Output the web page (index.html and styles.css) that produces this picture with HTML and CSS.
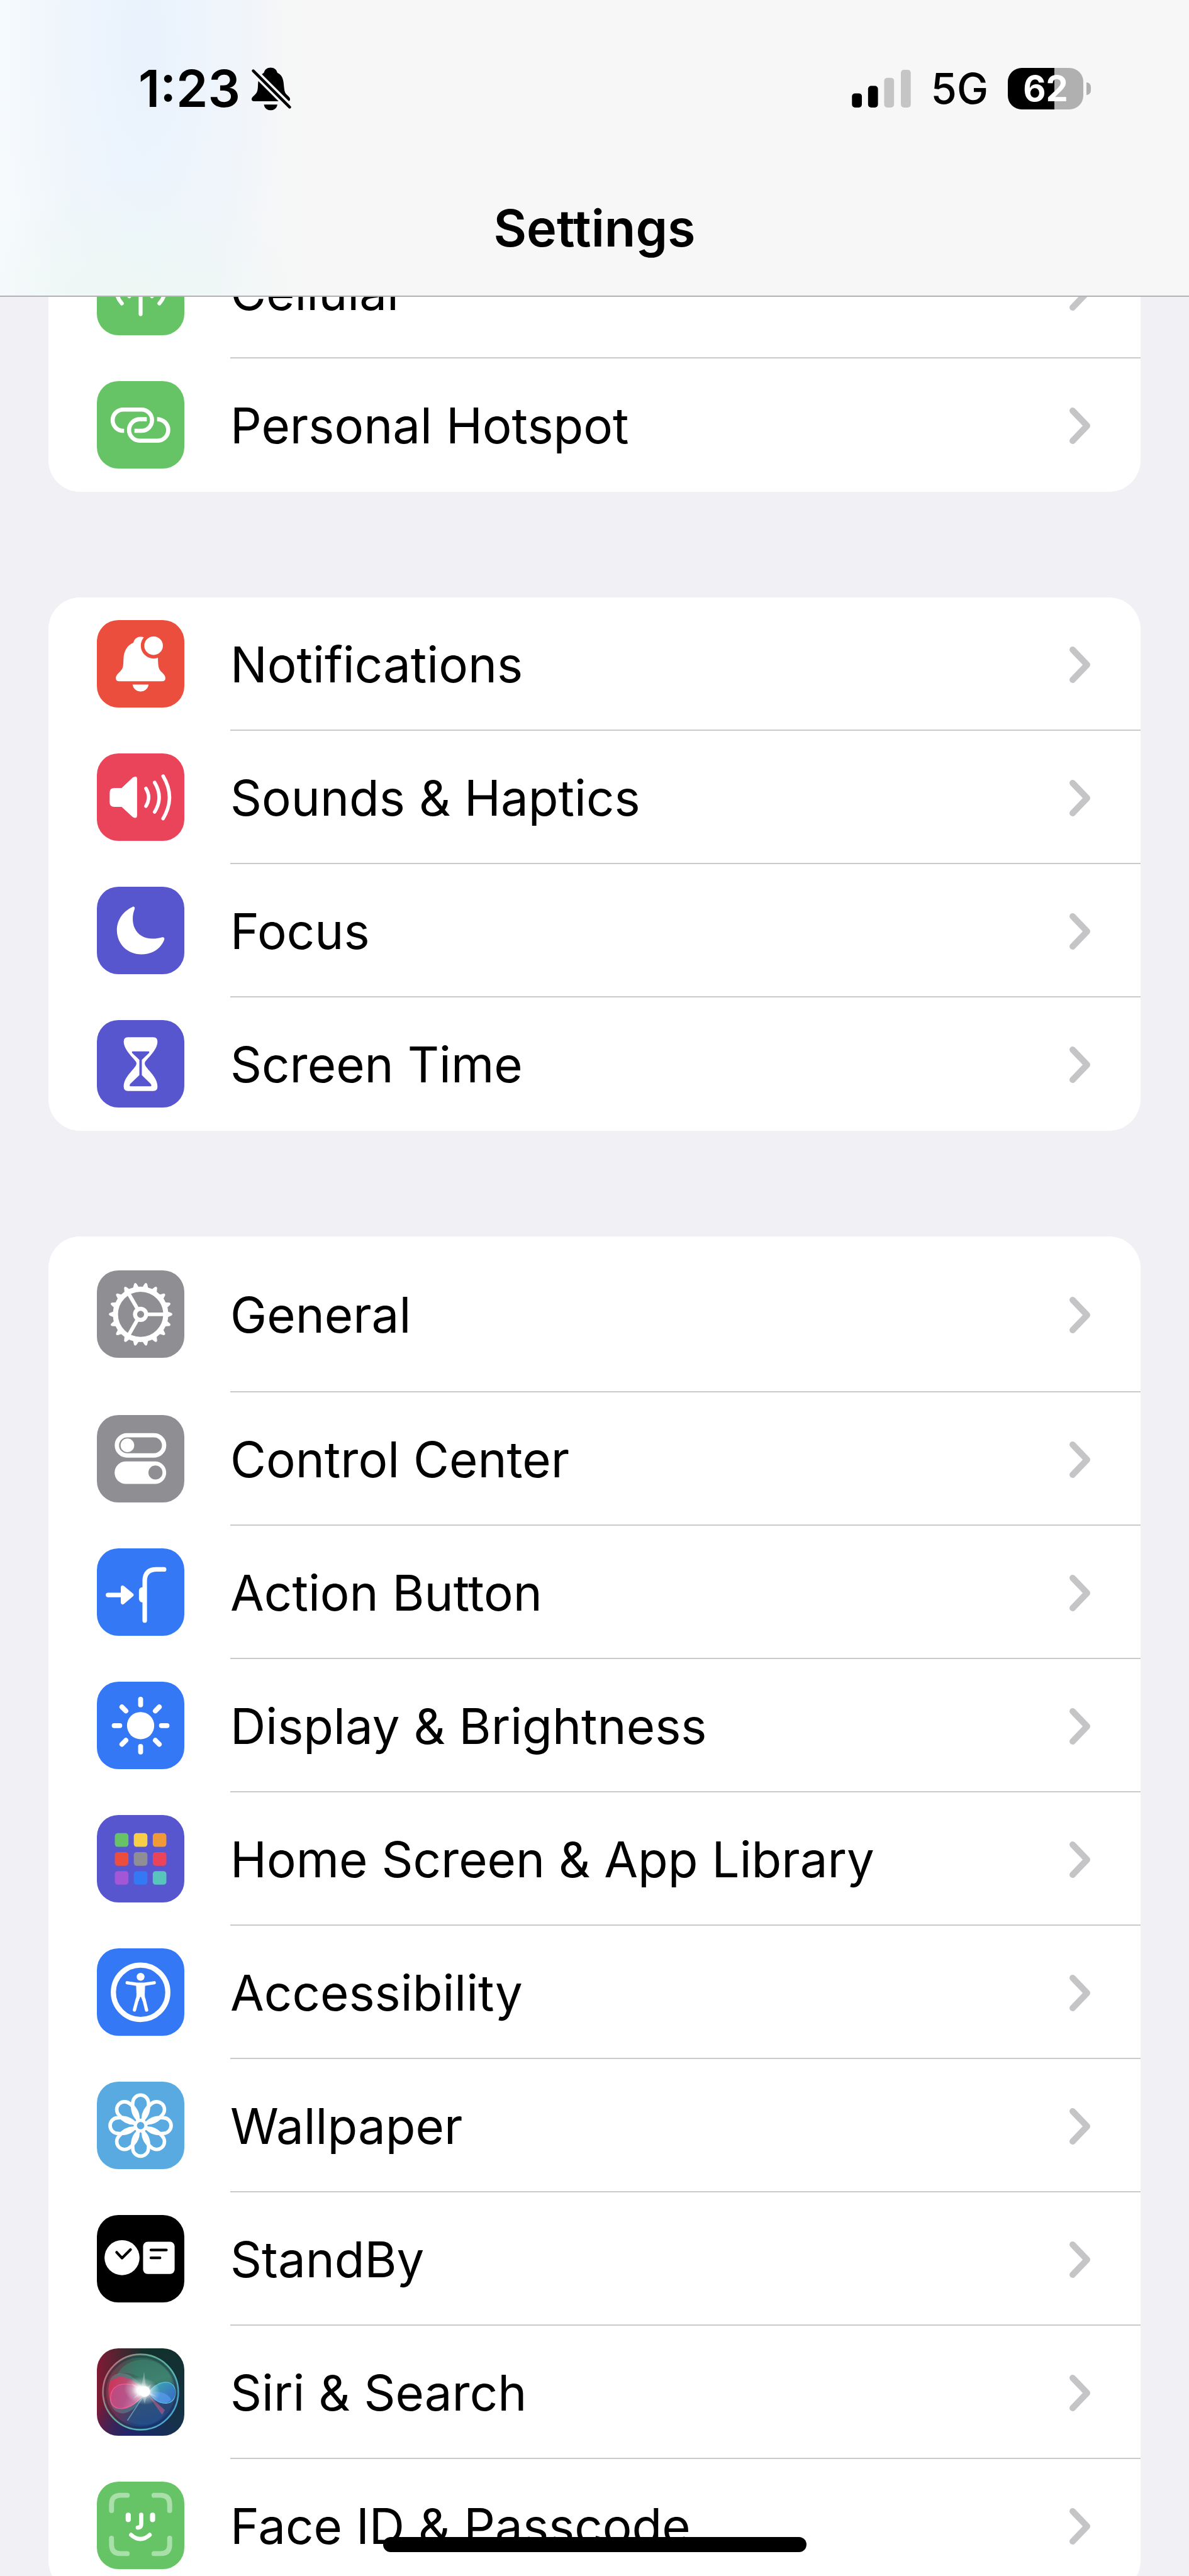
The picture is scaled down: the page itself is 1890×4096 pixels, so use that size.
FILE: index.html
```
<!DOCTYPE html>
<html lang="en">
  <head>
    <meta charset="UTF-8" />
    <meta name="viewport" content="width=device-width, initial-scale=1.0" />
    <title>Settings</title>
    <link rel="stylesheet" href="styles.css">
  </head>
  <body>
    <header class="header">
      <!-- Status bar -->
      <div class="status-bar">
        <div class="status-left">
          <span class="time">1:23</span>
          <svg class="silent" viewBox="0 0 194 212">
            <mask id="slash">
              <rect width="194" height="212" fill="#fff" />
              <path d="M-10 -1L204 213" stroke="#000" stroke-width="36" />
            </mask>
            <g mask="url(#slash)">
              <path d="M93 1C76 1 64 10 60 27C40 38 32 60 31 86C30 114 28 124 14 136C4 145 0 150 0 156Q0 166 12 166H176Q188 166 188 156C188 150 184 145 174 136C160 124 160 110 157 82C155 54 146 36 126 27C122 10 110 1 93 1Z" />
              <path d="M60 182H126C123 200 110 210 93 210S63 200 60 182Z" />
            </g>
            <path d="M8 17L186 195" stroke="#000" stroke-width="14" stroke-linecap="round" />
          </svg>
        </div>
        <div class="status-right">
          <svg class="signal" viewBox="0 0 95 61">
            <rect x="0" y="38" width="16" height="23" rx="5" />
            <rect x="26" y="26" width="16" height="35" rx="5" />
            <rect x="52" y="13" width="16" height="48" rx="5" fill="#c5c5c5" />
            <rect x="79" y="0" width="16" height="61" rx="5" fill="#c5c5c5" />
          </svg>
          <span class="network">5G</span>
          <div class="battery-wrap">
            <div class="battery">62</div>
            <div class="battery-tip"></div>
          </div>
        </div>
      </div>
      <h1 class="title">Settings</h1>
    </header>

    <main class="content">
      <!-- Connectivity -->
      <nav class="card">
        <a class="row" href="#cellular">
          <svg class="icon green" viewBox="0 0 424 424">
            <g fill="none" stroke="#fff" stroke-width="19" stroke-linecap="round">
              <path d="M212 190V322" />
              <path d="M121 270A121 121 0 0 1 121 110M303 270A121 121 0 0 0 303 110" />
              <path d="M157 235A71 71 0 0 1 157 145M267 235A71 71 0 0 0 267 145" />
            </g>
          </svg>
          <span class="label">Cellular<svg class="chevron" viewBox="0 0 36 60"><path d="M6 6L29 30L6 54" /></svg></span>
        </a>
        <a class="row" href="#hotspot">
          <svg class="icon green" viewBox="0 0 424 424">
            <g fill="none" stroke="#fff" stroke-width="20">
              <path d="M132 241H128A51.5 51.5 0 0 1 128 138H216A51.5 51.5 0 0 1 216 241H182" />
              <path d="M242 185H208A52 52 0 0 0 208 289H294A52 52 0 0 0 294 185H292" />
            </g>
          </svg>
          <span class="label">Personal Hotspot<svg class="chevron" viewBox="0 0 36 60"><path d="M6 6L29 30L6 54" /></svg></span>
        </a>
      </nav>

      <!-- Alerts and focus -->
      <nav class="card">
        <a class="row" href="#notifications">
          <svg class="icon orange-red" viewBox="0 0 424 424">
            <path fill="#fff" d="M212 81C193 81 181 92 177 110C146 122 130 152 129 190C128 228 127 234 112 250C98 264 92 270 92 282Q92 296 108 297H316Q332 296 332 282C332 270 326 264 312 250C298 236 297 224 296 184C295 152 278 122 247 110C243 92 231 81 212 81Z" />
            <path fill="#fff" d="M173 313H251C247 335 232 346 212 346S177 335 173 313Z" />
            <circle cx="275" cy="124" r="62" fill="#eb4e3d" />
            <circle cx="275" cy="124" r="45" fill="#fff" />
          </svg>
          <span class="label">Notifications<svg class="chevron" viewBox="0 0 36 60"><path d="M6 6L29 30L6 54" /></svg></span>
        </a>
        <a class="row" href="#sounds">
          <svg class="icon pink" viewBox="0 0 424 424">
            <path fill="#fff" d="M84 168H120L174 117Q195 104 195 124V300Q195 320 174 309L120 259H84Q62 259 62 238V190Q62 168 84 168Z" />
            <path fill="none" stroke="#fff" stroke-width="17" stroke-linecap="round" d="M238 170Q264 213 238 256M280 141Q324 213 280 284M321 110Q383 213 321 316" />
          </svg>
          <span class="label">Sounds &amp; Haptics<svg class="chevron" viewBox="0 0 36 60"><path d="M6 6L29 30L6 54" /></svg></span>
        </a>
        <a class="row" href="#focus">
          <svg class="icon indigo" viewBox="0 0 424 424">
            <path fill="#fff" d="M172 98C178 94 186 98 183 108C172 134 170 172 183 200C198 235 232 252 270 252C290 252 300 250 317 245C324 243 329 248 327 256C310 300 270 328 216 328C148 328 97 278 97 210C97 160 128 118 172 98Z" />
          </svg>
          <span class="label">Focus<svg class="chevron" viewBox="0 0 36 60"><path d="M6 6L29 30L6 54" /></svg></span>
        </a>
        <a class="row" href="#screen-time">
          <svg class="icon indigo" viewBox="0 0 424 424">
            <path fill="#fff" d="M150 83H274Q294 83 294 105C292 150 236 192 233 205Q231 210 233 216C240 238 294 275 294 322Q294 344 274 344H150Q130 344 130 322C130 275 184 238 191 216Q193 210 191 205C188 192 132 150 130 105Q130 83 150 83Z" />
            <path fill="#5756ce" d="M172 152H252Q256 154 253 159L218 193V267L262 310Q268 321 258 321H164Q156 321 161 310L206 267V193L171 159Q168 154 172 152Z" />
          </svg>
          <span class="label">Screen Time<svg class="chevron" viewBox="0 0 36 60"><path d="M6 6L29 30L6 54" /></svg></span>
        </a>
      </nav>

      <!-- Device -->
      <nav class="card">
        <a class="row row-tall" href="#general">
          <svg class="icon gray" viewBox="0 0 424 424">
            <defs>
              <path id="tooth" d="M126 -17L136 -12L150 -6Q158 0 150 6L136 12L126 17Z" />
              <g id="teeth">
                <use href="#tooth" />
                <use href="#tooth" transform="rotate(20)" />
                <use href="#tooth" transform="rotate(40)" />
              </g>
            </defs>
            <g transform="translate(212 213)" fill="#fff">
              <use href="#teeth" />
              <use href="#teeth" transform="rotate(60)" />
              <use href="#teeth" transform="rotate(120)" />
              <use href="#teeth" transform="rotate(180)" />
              <use href="#teeth" transform="rotate(240)" />
              <use href="#teeth" transform="rotate(300)" />
              <g fill="none" stroke="#fff">
                <circle r="122" stroke-width="25" />
                <circle r="27" stroke-width="20" />
                <path d="M30 0H115" stroke-width="18" />
                <path d="M30 0H115" stroke-width="18" transform="rotate(120)" />
                <path d="M30 0H115" stroke-width="18" transform="rotate(240)" />
              </g>
            </g>
          </svg>
          <span class="label">General<svg class="chevron" viewBox="0 0 36 60"><path d="M6 6L29 30L6 54" /></svg></span>
        </a>
        <a class="row" href="#control-center">
          <svg class="icon gray" viewBox="0 0 424 424">
            <rect x="97" y="98" width="229" height="98" rx="49" fill="none" stroke="#fff" stroke-width="21" />
            <circle cx="148" cy="147" r="33" fill="#fff" />
            <rect x="86" y="225" width="250" height="109" rx="54" fill="#fff" />
            <circle cx="284" cy="279" r="34" fill="#8e8e93" />
          </svg>
          <span class="label">Control Center<svg class="chevron" viewBox="0 0 36 60"><path d="M6 6L29 30L6 54" /></svg></span>
        </a>
        <a class="row" href="#action-button">
          <svg class="icon blue" viewBox="0 0 424 424">
            <g fill="none" stroke="#fff" stroke-width="22" stroke-linecap="round" stroke-linejoin="round">
              <path d="M54 226H120" />
              <path d="M232 350V158Q232 102 290 102H326" />
              <path d="M125 189L169 226L125 263Z" fill="#fff" stroke-width="18" />
            </g>
            <rect x="204" y="188" width="34" height="74" rx="17" fill="#fff" />
          </svg>
          <span class="label">Action Button<svg class="chevron" viewBox="0 0 36 60"><path d="M6 6L29 30L6 54" /></svg></span>
        </a>
        <a class="row" href="#display">
          <svg class="icon blue" viewBox="0 0 424 424">
            <g transform="translate(212 213)" stroke="#fff" stroke-width="24" stroke-linecap="round">
              <circle r="66" fill="#fff" stroke="none" />
              <path d="M0 -128V-101M0 101V128M-128 0H-101M101 0H128" />
              <path d="M0 -128V-101M0 101V128M-128 0H-101M101 0H128" transform="rotate(45)" />
            </g>
          </svg>
          <span class="label">Display &amp; Brightness<svg class="chevron" viewBox="0 0 36 60"><path d="M6 6L29 30L6 54" /></svg></span>
        </a>
        <a class="row" href="#home-screen">
          <svg class="icon indigo" viewBox="0 0 424 424">
            <rect x="87" y="88" width="66" height="66" rx="14" fill="#67c466" />
            <rect x="179" y="88" width="66" height="66" rx="14" fill="#f7ce46" />
            <rect x="271" y="88" width="66" height="66" rx="14" fill="#f09a37" />
            <rect x="87" y="180" width="66" height="66" rx="14" fill="#eb4e3d" />
            <rect x="179" y="180" width="66" height="66" rx="14" fill="#8e8e93" />
            <rect x="271" y="180" width="66" height="66" rx="14" fill="#ea445a" />
            <rect x="87" y="272" width="66" height="66" rx="14" fill="#a357d7" />
            <rect x="179" y="272" width="66" height="66" rx="14" fill="#3478f6" />
            <rect x="271" y="272" width="66" height="66" rx="14" fill="#59c4bd" />
          </svg>
          <span class="label">Home Screen &amp; App Library<svg class="chevron" viewBox="0 0 36 60"><path d="M6 6L29 30L6 54" /></svg></span>
        </a>
        <a class="row" href="#accessibility">
          <svg class="icon blue" viewBox="0 0 424 424">
            <circle cx="212" cy="213" r="132" fill="none" stroke="#fff" stroke-width="25" />
            <circle cx="212" cy="138" r="19" fill="#fff" />
            <path d="M190 172H234L232 224Q232 236 236 250L222 256L214 236H210L202 256L188 250Q192 236 192 224Z" fill="#fff" />
            <path d="M147 167L194 174H230L278 167M196 246L182 299M228 246L241 299" fill="none" stroke="#fff" stroke-width="16" stroke-linecap="round" />
          </svg>
          <span class="label">Accessibility<svg class="chevron" viewBox="0 0 36 60"><path d="M6 6L29 30L6 54" /></svg></span>
        </a>
        <a class="row" href="#wallpaper">
          <svg class="icon sky" viewBox="0 0 424 424">
            <defs>
              <path id="petal" d="M-4 -24C-38 -48 -41 -80 -38 -110A38 38 0 0 1 38 -110C41 -80 38 -48 4 -24" />
            </defs>
            <g transform="translate(212 213)" fill="none" stroke="#fff" stroke-width="17">
              <use href="#petal" />
              <use href="#petal" transform="rotate(45)" />
              <use href="#petal" transform="rotate(90)" />
              <use href="#petal" transform="rotate(135)" />
              <use href="#petal" transform="rotate(180)" />
              <use href="#petal" transform="rotate(225)" />
              <use href="#petal" transform="rotate(270)" />
              <use href="#petal" transform="rotate(315)" />
              <circle r="25" stroke-width="14" fill="#59aae1" />
            </g>
          </svg>
          <span class="label">Wallpaper<svg class="chevron" viewBox="0 0 36 60"><path d="M6 6L29 30L6 54" /></svg></span>
        </a>
        <a class="row" href="#standby">
          <svg class="icon black" viewBox="0 0 424 424">
            <circle cx="122" cy="207" r="85" fill="#fff" />
            <rect x="224" y="130" width="153" height="156" rx="22" fill="#fff" />
            <path d="M96 181L122 209L163 168M262 170H337M262 208H306" fill="none" stroke="#000" stroke-width="13" stroke-linecap="round" stroke-linejoin="round" />
          </svg>
          <span class="label">StandBy<svg class="chevron" viewBox="0 0 36 60"><path d="M6 6L29 30L6 54" /></svg></span>
        </a>
        <a class="row" href="#siri">
          <svg class="icon siri" viewBox="0 0 424 424">
            <defs>
              <linearGradient id="rim" x1="0" y1="0.2" x2="1" y2="0.8">
                <stop offset="0" stop-color="#c9687c" />
                <stop offset="0.4" stop-color="#5fae95" />
                <stop offset="0.7" stop-color="#55b9b5" />
                <stop offset="1" stop-color="#4a9fd8" />
              </linearGradient>
              <linearGradient id="orb" x1="0.2" y1="0" x2="0.5" y2="1">
                <stop offset="0" stop-color="#2c5a4c" />
                <stop offset="0.45" stop-color="#3d7a6c" />
                <stop offset="0.7" stop-color="#34496b" />
                <stop offset="1" stop-color="#1c3f86" />
              </linearGradient>
              <linearGradient id="redside">
                <stop offset="0" stop-color="#a01c3c" stop-opacity="0.85" />
                <stop offset="0.45" stop-color="#7a2848" stop-opacity="0" />
              </linearGradient>
              <linearGradient id="blob-red" x1="0" y1="0" x2="1" y2="0.3">
                <stop offset="0" stop-color="#e02850" />
                <stop offset="0.6" stop-color="#c84a78" />
                <stop offset="1" stop-color="#ffd0e0" />
              </linearGradient>
              <linearGradient id="blob-blue" x1="0" y1="0" x2="1" y2="0.6">
                <stop offset="0" stop-color="#9fe8f0" />
                <stop offset="0.4" stop-color="#3c9fbe" />
                <stop offset="1" stop-color="#3978d8" />
              </linearGradient>
              <radialGradient id="flare">
                <stop offset="0" stop-color="#fff" />
                <stop offset="0.3" stop-color="#fff" stop-opacity="0.95" />
                <stop offset="0.6" stop-color="#e8f4f4" stop-opacity="0.4" />
                <stop offset="1" stop-color="#e8f4f4" stop-opacity="0" />
              </radialGradient>
            </defs>
            <circle cx="212" cy="212" r="182" fill="url(#orb)" />
            <circle cx="212" cy="212" r="182" fill="url(#redside)" />
            <path d="M98 130C130 50 270 20 340 110C370 150 370 190 340 180C300 160 250 180 220 150C180 120 130 110 98 130Z" fill="#3f8a74" fill-opacity="0.5" />
            <path d="M232 215L148 350C200 385 290 380 330 315Z" fill="#2a5a8c" fill-opacity="0.5" />
            <path d="M70 140C110 100 180 120 235 205C200 300 130 340 85 300C50 260 50 180 70 140Z" fill="#7fb8c0" fill-opacity="0.3" />
            <path d="M57 190C60 130 150 110 240 208C200 270 130 320 80 280C60 260 55 220 57 190Z" fill="url(#blob-red)" fill-opacity="0.85" />
            <path d="M66 240C70 160 160 155 240 210C190 260 150 300 100 290C78 284 66 266 66 240Z" fill="#b4589a" fill-opacity="0.5" stroke="#f25a92" stroke-width="4" />
            <path d="M252 214C290 160 365 140 382 205C388 280 300 290 252 214Z" fill="url(#blob-blue)" fill-opacity="0.85" stroke="#58c6d8" stroke-width="4" />
            <path d="M250 216C300 200 350 220 360 250C320 285 280 260 250 216Z" fill="#5a9cf0" fill-opacity="0.7" />
            <path d="M245 222L330 300L316 322Z" fill="#c05a88" fill-opacity="0.6" />
            <path d="M230 225L148 350" stroke="#8fc4d0" stroke-width="5" stroke-opacity="0.6" />
            <ellipse cx="220" cy="206" rx="90" ry="66" fill="url(#flare)" transform="rotate(15 220 206)" />
            <path d="M229 112L238 190L262 176L250 208L290 236L244 222L232 270L218 224L176 244L208 210L166 170L216 190Z" fill="#fff" fill-opacity="0.3" />
            <circle cx="232" cy="210" r="26" fill="#fff" />
            <circle cx="212" cy="212" r="172" fill="none" stroke="#0c2438" stroke-width="10" stroke-opacity="0.35" />
            <circle cx="212" cy="212" r="183" fill="none" stroke="url(#rim)" stroke-width="7" />
          </svg>
          <span class="label">Siri &amp; Search<svg class="chevron" viewBox="0 0 36 60"><path d="M6 6L29 30L6 54" /></svg></span>
        </a>
        <a class="row" href="#face-id">
          <svg class="icon green" viewBox="0 0 424 424">
            <g fill="none" stroke="#fff" stroke-linecap="round">
              <path stroke="#a9dfa8" stroke-width="24" d="M71 140V110Q71 66 115 66H147M277 66H309Q353 66 353 110V140M71 274V305Q71 349 115 349H147M277 349H309Q353 349 353 305V274" />
              <path stroke-width="25" d="M152 163V184M270 163V184" />
              <path stroke-width="20" d="M215 160V206Q215 223 198 223M166 258Q211 298 256 258" />
            </g>
          </svg>
          <span class="label">Face ID &amp; Passcode<svg class="chevron" viewBox="0 0 36 60"><path d="M6 6L29 30L6 54" /></svg></span>
        </a>
      </nav>
    </main>

    <div class="home-indicator"></div>
  </body>
</html>
```
FILE: styles.css
```
* {
  box-sizing: border-box;
}
body {
  font-family: Inter, "Liberation Sans", sans-serif;
  font-size: 78px;
  line-height: 100px;
  color: #000;
  margin: 0;
  height: 100vh;
  overflow: hidden;
  background-color: #f0f0f5;
}

/* Header */
.header {
  position: fixed;
  top: 0;
  left: 0;
  right: 0;
  z-index: 1;
  padding: 91px 0 57px;
  border-bottom: 2px solid #b2b2b4;
  background-color: #f7f7f7;
  background-image:
    radial-gradient(ellipse 14% 40% at 11% 100%, #eef8f4, rgba(238, 248, 244, 0)),
    radial-gradient(ellipse 12% 120% at 12% 15%, #e9f2fd, rgba(233, 242, 253, 0)),
    linear-gradient(to right, #f6fafc, #f0f6fb 12%, #f7f7f7 26%);
}
.status-bar {
  display: flex;
  justify-content: space-between;
  align-items: center;
  padding: 0 156px 0 220px;
}
.status-left {
  display: flex;
  align-items: center;
  gap: 18px;
}
.time {
  font-size: 81px;
  font-weight: 600;
}
.silent {
  width: 63px;
  height: 69px;
}
.status-right {
  display: flex;
  align-items: center;
  gap: 31px;
}
.signal {
  width: 94px;
  height: 60px;
}
.network {
  font-size: 67px;
  font-weight: 500;
}
.battery-wrap {
  display: flex;
  align-items: center;
  gap: 5px;
}
.battery {
  width: 120px;
  height: 66px;
  border-radius: 22px;
  background: linear-gradient(to right, #000 62%, #b0b0b0 62%);
  color: #fff;
  font-size: 56px;
  font-weight: 700;
  line-height: 66px;
  text-align: center;
}
.battery-tip {
  width: 7px;
  height: 20px;
  border-radius: 0 10px 10px 0;
  background-color: #b0b0b0;
}
.title {
  margin: 122px 0 0;
  font-size: 81px;
  font-weight: 600;
  line-height: 100px;
  text-align: center;
}

/* Settings list */
.content {
  display: flex;
  flex-direction: column;
  gap: 168px;
  padding: 358px 77px 0;
}
.card {
  background-color: #fff;
  border-radius: 50px;
  overflow: hidden;
}
.row {
  display: flex;
  align-items: center;
  gap: 73px;
  height: 212px;
  padding-left: 77px;
  color: inherit;
  text-decoration: none;
}
.row-tall {
  height: 248px;
}
.label {
  display: flex;
  flex: 1;
  justify-content: space-between;
  align-items: center;
  align-self: stretch;
  padding: 3px 78px 0 0;
  border-bottom: 2px solid #cbcbcd;
}
.row:last-child .label {
  border-bottom-color: transparent;
}
.chevron {
  width: 36px;
  height: 60px;
  fill: none;
  stroke: #c5c5c7;
  stroke-width: 10;
  stroke-linecap: round;
  stroke-linejoin: round;
}

/* Icons */
.icon {
  width: 139px;
  height: 139px;
  margin-bottom: 2px;
  border-radius: 34px;
}
.green {
  background-color: #67c466;
}
.orange-red {
  background-color: #eb4e3d;
}
.pink {
  background-color: #ea445a;
}
.indigo {
  background-color: #5756ce;
}
.gray {
  background-color: #8e8e93;
}
.blue {
  background-color: #3478f6;
}
.sky {
  background-color: #59aae1;
}
.black {
  background-color: #000;
}
.siri {
  background:
    radial-gradient(circle at 38% 105%, #1d2470, rgba(29, 36, 112, 0) 45%),
    linear-gradient(to right, #821a34, rgba(110, 20, 50, 0) 55%),
    linear-gradient(to bottom, #12302c, #16324f);
}

.home-indicator {
  position: fixed;
  left: 0;
  right: 0;
  bottom: 38px;
  z-index: 1;
  width: 673px;
  height: 24px;
  margin: 0 auto;
  border-radius: 12px;
  background-color: #000;
}
```
